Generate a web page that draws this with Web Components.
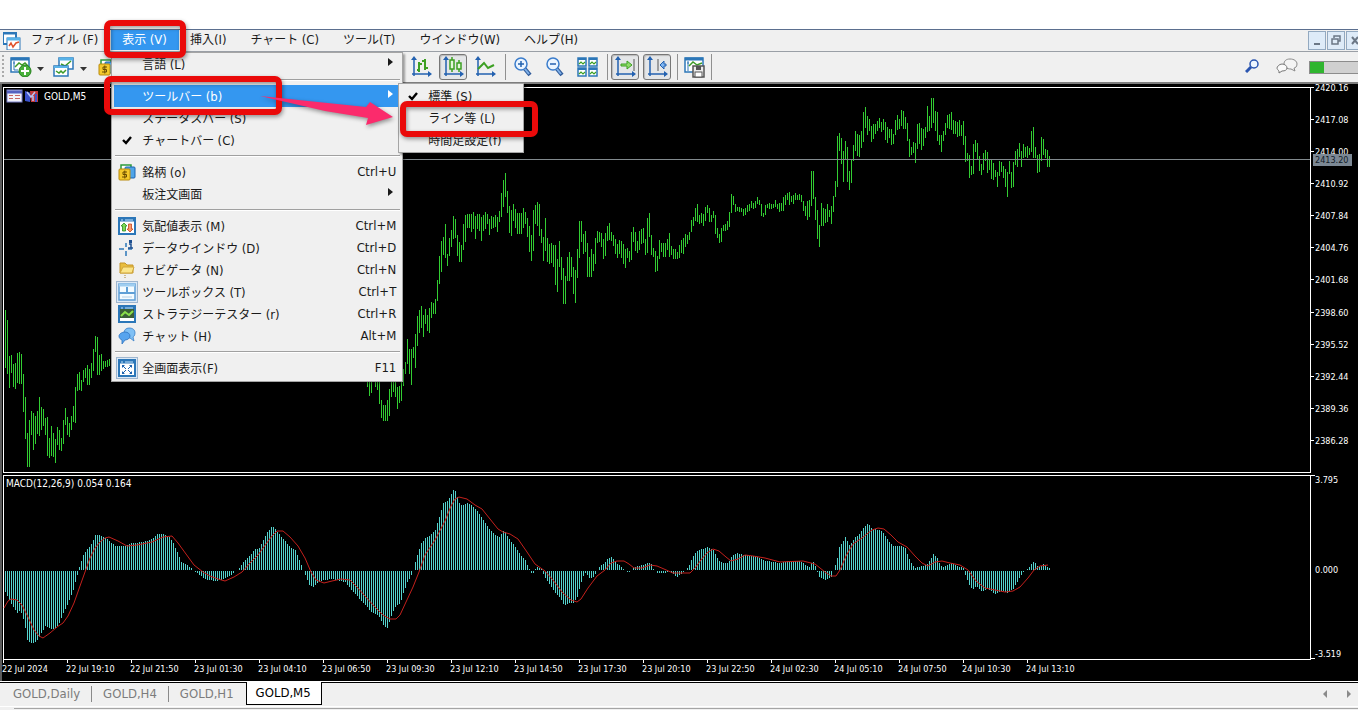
<!DOCTYPE html>
<html lang="ja">
<head>
<meta charset="utf-8">
<title>GOLD,M5</title>
<style>
html,body{margin:0;background:#fff}
body{font-family:"DejaVu Sans Condensed","Noto Sans CJK JP",sans-serif;font-size:12px;color:#1a1a1a}
</style>
</head>
<body>
<mt-app></mt-app>
<script>
const define=(name,css,html,setup)=>{
  customElements.define(name,class extends HTMLElement{
    connectedCallback(){
      if(this.shadowRoot)return;
      const root=this.attachShadow({mode:'open'});
      const a=n=>this.getAttribute(n)||'';
      root.innerHTML='<style>'+css+'</style>'+(typeof html==='function'?html(a,this):html);
      if(setup)setup(root,this);
    }
  });
};
/* Latin parts of a label are set one pixel larger than the kana */
const label=t=>t.replace(/(\([A-Za-z]\))$/,'<span class="k">$1</span>');

const win='<rect x="1" y="1" width="16" height="16" fill="#fff" stroke="#2c77b8" stroke-width="2"/><path d="M1 3H17" stroke="#2c77b8" stroke-width="3"/><path d="M3 3H5M7 3H15" stroke="#bfe2fb"/>';
const axes='<path d="M4 2V20M2 18H20" stroke="#2361b0" stroke-width="1.500"/><path d="M4 0L1 4H7ZM22 18L18 15V21Z" fill="#2361b0"/>';
const lens='<circle cx="8" cy="7" r="6" fill="#eaf4ff" stroke="#3a7ccc" stroke-width="1.500"/><path d="M12 12L17 18" stroke="#2e5a9a" stroke-width="4"/><path d="M12 12L16 17" stroke="#7fb0e8" stroke-width="2"/>';
const coins='<path d="M3 6V2H13V4" fill="#fff" stroke="#2b9a3c" stroke-width="1.500"/><rect x="7" y="4" width="10" height="11" rx="1" fill="#4fa4e8" stroke="#1d64b0"/><rect x="1" y="6" width="11" height="11" rx="1" fill="#f4c92c" stroke="#b98a0d"/><path d="M9 9H5V11.500H8.500V14H4M6.800 7.500V15.500" fill="none" stroke="#6a4c00"/>';
const ICONS={
 app:[18,18,'<rect x="0" y="0" width="13" height="12" fill="#fff" stroke="#2c77b8" stroke-width="2"/><path d="M0 1H13" stroke="#2c77b8" stroke-width="3"/><rect x="4" y="6" width="13" height="12" fill="#fff" stroke="#2c77b8"/><path d="M4 7H17" stroke="#58b2e8" stroke-width="3"/><path d="M6 14L8 11L10 15L13 11L16 10" fill="none" stroke="#e0522c" stroke-width="1.500"/>'],
 newchart:[22,20,'<rect x="1" y="1" width="18" height="14" fill="#fff" stroke="#2c77b8" stroke-width="1.500"/><path d="M1 2H19" stroke="#2c77b8" stroke-width="3"/><path d="M4 4V13H8M3 6H5" stroke="#2c77b8" fill="none"/><path d="M5 10L9 6L12 8L15 6L18 9" fill="none" stroke="#3d9b28" stroke-width="1.500"/><circle cx="15" cy="14" r="6" fill="#48b03a" stroke="#24801c"/><path d="M15 10V18M11 14H19" stroke="#fff" stroke-width="2"/>'],
 profiles:[22,20,'<rect x="6" y="1" width="14" height="11" fill="#fff" stroke="#2c77b8" stroke-width="1.500"/><path d="M6 2H20" stroke="#58b2e8" stroke-width="3"/><path d="M8 7L12 9L18 4" fill="none" stroke="#3d9b28" stroke-width="1.500"/><rect x="1" y="9" width="14" height="10" fill="#fff" stroke="#2c77b8" stroke-width="1.500"/><path d="M1 10H15" stroke="#58b2e8" stroke-width="2"/><path d="M3 14L6 16L8 14L10 16L13 13" fill="none" stroke="#3d9b28" stroke-width="1.500"/>'],
 coins:[18,18,coins],
 bars:[22,22,axes+'<path d="M9 6V16M7 14H9M9 8H12M15 3V14M12 5H15M15 12H18" stroke="#3da023" stroke-width="2"/>'],
 candles:[22,22,axes+'<path d="M10 1V16M17 4V16" stroke="#3da023" stroke-width="1.500"/><rect x="8" y="4" width="4" height="9" fill="#e3f6dc" stroke="#3da023" stroke-width="1.500"/><rect x="15" y="7" width="4" height="6" fill="#e3f6dc" stroke="#3da023" stroke-width="1.500"/>'],
 line:[22,22,axes+'<path d="M4 13L10 7L14 12L20 9" fill="none" stroke="#3da023" stroke-width="2"/>'],
 zoomin:[20,20,lens+'<path d="M8 4V10M5 7H11" stroke="#2361b0" stroke-width="1.500"/>'],
 zoomout:[20,20,lens+'<path d="M5 7H11" stroke="#2361b0" stroke-width="1.500"/>'],
 tile:[21,20,['0,0','11,0','0,10','11,10'].map(p=>'<g transform="translate('+p+')"><rect x="1" y="1" width="8" height="8" fill="#fff" stroke="#2c77b8" stroke-width="1.500"/><path d="M1 2H9" stroke="#2c77b8" stroke-width="2"/><path d="M2 7L4 5L6 7L8 5" fill="none" stroke="#3da023" stroke-width="1.200"/></g>').join('')],
 autoscroll:[22,22,axes+'<path d="M20 3V15" stroke="#555"/><path d="M7 8H13V5L18 9L13 13V10H7Z" fill="#8fdc6a" stroke="#3da023"/>'],
 shift:[22,22,axes+'<path d="M12 3V15" stroke="#555"/><path d="M20 8H18V5L14 9L18 13V10H20Z" fill="#7db4f0" stroke="#2361b0"/>'],
 template:[22,21,'<rect x="1" y="1" width="18" height="14" fill="#fff" stroke="#2c77b8" stroke-width="1.500"/><path d="M1 2H19" stroke="#2c77b8" stroke-width="3"/><path d="M4 4V14M3 6H5" stroke="#2c77b8"/><path d="M5 9L9 5L13 8L18 6" fill="none" stroke="#3d9b28" stroke-width="1.500"/><rect x="9" y="9" width="11" height="11" fill="#ececec" stroke="#555" stroke-width="1.500"/><rect x="12" y="9" width="5" height="4" fill="#555"/><rect x="11" y="15" width="7" height="5" fill="#fff" stroke="#555"/>'],
 search:[14,14,'<circle cx="9" cy="5" r="4" fill="#eef6ff" stroke="#2a55b0" stroke-width="1.500"/><path d="M6 8L1 13" stroke="#2a55b0" stroke-width="3"/>'],
 chats:[22,16,'<path d="M14 1C18 1 21 3 21 6S19 10 18 10L19 13L15 11C11 11 8 9 8 6S10 1 14 1Z" fill="#f4f4f4" stroke="#8a8a8a"/><path d="M6 6C9 6 11 8 11 10S9 13 6 13L3 15V13C2 12 1 11 1 10S3 6 6 6Z" fill="#fafafa" stroke="#777"/>'],
 market:[18,18,win+'<path d="M6 6L9 9H7.500V14H4.500V9H3Z" fill="#7ed957" stroke="#2b8a1c" stroke-width=".8"/><path d="M12 15L15 12H13.500V7H10.500V12H9Z" fill="#f79a6a" stroke="#c8441c" stroke-width=".8"/>'],
 data:[18,18,'<path d="M8 4V8M8 12V17M1 10H6M10 10H14" stroke="#2c77b8" stroke-width="1.500"/><path d="M11 5H13V9M10 9H15" stroke="#1d4f90" stroke-width="1.500" fill="none"/><rect x="11" y="1" width="3" height="3" fill="#1d4f90"/>'],
 folder:[18,18,'<path d="M2 2H7L9 4H15V12H2Z" fill="#e9bd3c" stroke="#c4952a"/><path d="M5 6H16L14 12H2Z" fill="#fbe58a" stroke="#d0a53a"/><path d="M7 14V17" stroke="#a8842c" stroke-dasharray="1 1"/>'],
 toolbox:[18,18,'<rect x="1" y="1" width="16" height="16" fill="#f4fbff" stroke="#5f9fd6" stroke-width="1.500"/><path d="M1 2H17" stroke="#9fcdf0" stroke-width="3"/><path d="M1 10H17M9 4V10" stroke="#5f9fd6" stroke-width="2"/><path d="M4 14H14" stroke="#b5cfe6"/>'],
 tester:[18,18,win+'<rect x="2" y="4" width="14" height="9" fill="#3c5f38"/><path d="M3 11L7 7L11 10L15 6" fill="none" stroke="#8be04a" stroke-width="2"/>'],
 chat:[18,18,'<path d="M11 1C15 1 17 3 17 6C17 9 15 10 15 10L16 14L12 11C8 11 6 9 6 6S8 1 11 1Z" fill="#7fc0f5" stroke="#3b80c8" stroke-width=".8"/><path d="M7 5C10 5 12 7 12 9S10 13 7 13L4 17V13C2 12 1 11 1 9S4 5 7 5Z" fill="#57a4ee" stroke="#2e74c0" stroke-width=".8"/>'],
 full:[18,18,win+'<path d="M4 9V6H7L4 9ZM14 9V6H11ZM4 12V15H7ZM14 12V15H11Z" fill="#1d64b0"/><path d="M5 7L8 10M13 7L10 10M5 14L8 11M13 14L10 11" stroke="#1d64b0"/>'],
 check:[10,9,'<path d="M1 4L4 7L9 1" fill="none" stroke="#000" stroke-width="2.400"/>'],
 sub:[5,8,'<path d="M0 0L5 4L0 8Z" fill="currentColor"/>'],
 drop:[7,4,'<path d="M0 0H7L3.500 4Z" fill="#333"/>'],
 min:[16,16,'<path d="M5 12H11" stroke="#6b7785" stroke-width="2"/>'],
 restore:[16,16,'<path d="M6 6V4H12V9H10" fill="none" stroke="#6b7785" stroke-width="1.500"/><rect x="4" y="7" width="6" height="5" fill="none" stroke="#6b7785" stroke-width="1.500"/>'],
 close:[16,16,'<path d="M5 5L11 12M11 5L5 12" stroke="#6b7785" stroke-width="2"/>'],
 prev:[4,8,'<path d="M4 0V8L0 4Z" fill="#8a8a8a"/>'],
 next:[4,8,'<path d="M0 0V8L4 4Z" fill="#8a8a8a"/>']
};
define('mt-icon',':host{display:inline-block;line-height:0}svg{display:block}',a=>{
  const i=ICONS[a('name')];
  return i?`<svg width="${i[0]}" height="${i[1]}" viewBox="0 0 ${i[0]} ${i[1]}" aria-hidden="true">${i[2]}</svg>`:'';
});

/* ---------- menus ---------- */
define('mt-menu',`:host{display:block;position:relative}
 button{display:block;height:20px;margin:0;padding:0 13px 0 11px;border:0;background:none;font:inherit;line-height:20px;color:inherit;white-space:nowrap}
 :host([open]) button{padding:0 12px 0 11px;background:#3497f0;color:#fff}
 .k{font-size:13px}
 .pop{position:absolute;left:0;top:22px;z-index:5}`,
 a=>`<button type="button">${label(a('label'))}</button><div class="pop"><slot></slot></div>`);
define('mt-popup',`:host{display:block;box-sizing:border-box;background:#f0f0f0;border:1px solid #a5a5a5;padding:0 2px 2px;box-shadow:2px 2px 2px rgba(0,0,0,.35)}
 :host([kind=main]){width:292px}
 :host([kind=sub]){width:126px;padding:1px}`,'<slot></slot>');
define('mt-sep',':host{display:block;box-sizing:border-box;height:10px;padding:4px 0 0 1px}hr{margin:0;border:0;border-top:1px solid #a0a0a0;border-bottom:1px solid #fff}','<hr>');
define('mt-row',`:host{display:block;position:relative}
 button{display:grid;grid-template-columns:28px 1fr auto;align-items:center;width:100%;height:22px;margin:0;padding:0 4px 0 0;border:0;background:none;font:inherit;color:inherit;text-align:left;white-space:nowrap}
 :host([active])>button,:host([active]) button{background:#3497f0;color:#fff}
 .i{display:flex;justify-content:center;align-items:center;box-sizing:border-box;width:22px;height:22px;margin-left:2px}
 :host([framed]) .i{background:#dce9f6;border:1px solid #9fb6cf}
 .t,.s{margin-bottom:2px}
 .k,.s{font-size:13px}
 .a{margin:0 3px 4px 0}
 .pop{position:absolute;left:calc(100% - 2px);top:-2px;z-index:6;color:#1a1a1a}`,
 a=>`<button type="button"><span class="i"><mt-icon name="${a('icon')}"></mt-icon></span><span class="t">${label(a('label'))}</span>${a('more')?'<mt-icon class="a" name="sub"></mt-icon>':`<span class="s">${a('key')}</span>`}</button><div class="pop"><slot></slot></div>`);
define('mt-menubar',`:host{display:flex;align-items:flex-start;box-sizing:border-box;height:23px;border-top:1px solid #5b6f8f;border-bottom:1px solid #9a9fa6;background:#f0f0f0}
 .logo{margin:2px 0 0 3px;width:17px}
 .w{display:flex;gap:1px;margin:1px 0 0 auto;width:50px;overflow:hidden}
 .w button{flex:none;box-sizing:border-box;width:18px;height:19px;padding:0;border:1px solid #93a9c0;background:#deebf8}`,
 `<mt-icon class="logo" name="app"></mt-icon>
 <mt-menu label="ファイル (F)"></mt-menu>
 <mt-menu label="表示 (V)" open>
  <mt-popup kind="main">
   <mt-row label="言語 (L)" more="1"></mt-row>
   <mt-sep></mt-sep>
   <mt-row label="ツールバー (b)" more="1" active>
    <mt-popup kind="sub">
     <mt-row icon="check" label="標準 (S)"></mt-row>
     <mt-row label="ライン等 (L)"></mt-row>
     <mt-row label="時間足設定(f)"></mt-row>
    </mt-popup>
   </mt-row>
   <mt-row label="ステータスバー (S)"></mt-row>
   <mt-row icon="check" label="チャートバー (C)"></mt-row>
   <mt-sep></mt-sep>
   <mt-row icon="coins" label="銘柄 (o)" key="Ctrl+U"></mt-row>
   <mt-row label="板注文画面" more="1"></mt-row>
   <mt-sep></mt-sep>
   <mt-row icon="market" label="気配値表示 (M)" key="Ctrl+M"></mt-row>
   <mt-row icon="data" label="データウインドウ (D)" key="Ctrl+D"></mt-row>
   <mt-row icon="folder" label="ナビゲータ (N)" key="Ctrl+N"></mt-row>
   <mt-row icon="toolbox" label="ツールボックス (T)" key="Ctrl+T" framed></mt-row>
   <mt-row icon="tester" label="ストラテジーテスター (r)" key="Ctrl+R"></mt-row>
   <mt-row icon="chat" label="チャット (H)" key="Alt+M"></mt-row>
   <mt-sep></mt-sep>
   <mt-row icon="full" label="全画面表示(F)" key="F11" framed></mt-row>
  </mt-popup>
 </mt-menu>
 <mt-menu label="挿入(I)"></mt-menu>
 <mt-menu label="チャート (C)"></mt-menu>
 <mt-menu label="ツール(T)"></mt-menu>
 <mt-menu label="ウインドウ(W)"></mt-menu>
 <mt-menu label="ヘルプ(H)"></mt-menu>
 <div class="w"><button aria-label="最小化"><mt-icon name="min"></mt-icon></button><button aria-label="元に戻す"><mt-icon name="restore"></mt-icon></button><button aria-label="閉じる"><mt-icon name="close"></mt-icon></button></div>`);

/* ---------- toolbar ---------- */
define('mt-tool',`:host{display:block;flex:none;width:28px;margin:0 2px}
 button{display:flex;align-items:center;justify-content:center;box-sizing:border-box;width:28px;height:26px;padding:0;border:1px solid transparent;border-radius:3px;background:none}
 :host([pressed]) button{border-color:#777;background:#e4e6e8;box-shadow:inset 1px 1px 1px #bbb}`,
 a=>`<button type="button" aria-label="${a('icon')}"><mt-icon name="${a('icon')}"></mt-icon></button>`);
define('mt-toolbar',`:host{display:flex;align-items:center;box-sizing:border-box;height:32px;background:#f0f0f0;border-bottom:2px solid #7d7d7d}
 .g{display:flex;align-items:center;box-sizing:border-box;width:405px;padding-left:2px}
 .grip{width:2px;height:24px;margin-right:1px;background:repeating-linear-gradient(#aaa 0 2px,transparent 2px 4px)}
 .d{width:11px}
 .sep{width:6px;height:26px;background:linear-gradient(#909090,#909090) 4px 0/1px 100% no-repeat}
 .sep.end{background-position:0 0}
 .r{display:flex;align-items:center;gap:17px;margin-left:auto}
 .r button{padding:0;border:0;background:none}
 .p{width:49px;height:13px;box-sizing:border-box;margin-left:-6px;border:1px solid #8c8c8c;border-right:0;background:linear-gradient(90deg,#2fb52f 14px,#d0d0d0 14px)}`,
 `<div class="g"><span class="grip"></span><mt-tool icon="newchart"></mt-tool><span class="d"><mt-icon name="drop"></mt-icon></span><mt-tool icon="profiles"></mt-tool><span class="d"><mt-icon name="drop"></mt-icon></span><mt-tool icon="coins"></mt-tool></div>
 <mt-tool icon="bars"></mt-tool><mt-tool icon="candles" pressed></mt-tool><mt-tool icon="line"></mt-tool><span class="sep"></span>
 <mt-tool icon="zoomin"></mt-tool><mt-tool icon="zoomout"></mt-tool><mt-tool icon="tile"></mt-tool><span class="sep"></span>
 <mt-tool icon="autoscroll" pressed></mt-tool><mt-tool icon="shift" pressed></mt-tool><span class="sep"></span><mt-tool icon="template"></mt-tool><span class="sep end"></span>
 <div class="r"><button aria-label="検索"><mt-icon name="search"></mt-icon></button><button aria-label="チャット"><mt-icon name="chats"></mt-icon></button><div class="p"></div></div>`);

/* ---------- chart data: first bar x, then high-low of each bar, two pixels apart ---------- */
const BARS=[
[5,'310-368 320-374 356-388 355-373 364-387 363-389 353-383 352-384 354-384 374-412 397-439 433-467 420-467 411-435 413-450 416-444 411-434 397-436 407-430 409-426 418-435 417-456 438-458 426-456 433-457 439-463 427-445 430-450 438-451 420-444 408-425 417-435 423-437 416-430 406-422 387-423 374-391 372-390 380-391 370-382 368-378 365-385 369-385 363-378 349-371 336-352 337-375 355-375 354-371 361-369 361-367 360-367 359-366'],
[367,'375-387 375-396 375-393 370-380 375-387 375-390 375-404 400-418 405-421 405-421 400-421 389-416 380-397 375-392 382-397 387-409 386-403 382-401 369-386 362-374 339-364 349-374 349-385 347-358 334-368 316-346 310-333 306-328 315-337 309-324 315-331 308-333 302-318 303-314 299-314 280-301 256-284 241-272 237-255 224-258 254-266 238-256 230-247 216-239 219-238 235-256 242-262 245-262 224-250 215-242 214-228 214-228 214-232 212-229 216-239 214-229 214-231 217-241 215-231 212-229 214-224 219-235 216-229 217-228 215-227 217-232 211-222 193-217 180-207 173-197 191-213 206-233 210-236 204-221 209-228 213-234 213-234 213-234 208-228 212-224 218-237 226-252 235-261 210-251 205-224 202-226 204-236 229-243 237-261 218-251 238-262 244-264 243-263 245-267 245-285 259-292 241-267 257-280 268-304 276-304 257-281 252-281 257-277 267-294 270-303 249-278 221-258 221-242 234-254 231-252 243-277 257-277 249-277 254-271 238-264 231-243 232-242 233-247 239-259 233-256 226-241 223-240 232-241 235-246 239-254 244-258 240-254 241-258 244-264 249-268 248-258 251-262 232-260 227-242 232-251 241-253 231-250 229-244 228-243 239-255 218-253 213-237 235-255 248-257 251-272 256-271 240-259 243-252 243-257 243-257 239-250 233-257 246-255 249-259 249-259 252-259 245-258 240-253 238-254 234-247 235-244 232-240 220-232 217-226 208-221 204-222 215-224 213-223 214-226 207-221 205-213 208-222 215-222 211-218 215-234 228-238 234-243 228-242 225-231 224-231 221-230 212-227 194-213 196-205 204-212 207-211 207-212 208-212 209-216 208-215 205-212 204-211 201-208 203-209 201-208 197-204 200-205 204-216 213-217 205-215 204-208 203-209 204-209 204-208 200-207 204-209 203-212 203-211 197-211 195-205 193-200 192-205 196-202 195-204 193-200 195-200 194-200 195-202 201-211 206-216 201-220 200-217 171-206 171-199 197-220 210-239 225-247 203-226 208-226 209-223 204-222 210-217 206-224 196-212 181-197 136-187 133-151 138-164 151-182 141-160 147-182 171-190 159-183 145-161 131-151 134-156 135-157 131-148 112-142 107-128 116-135 119-131 126-142 124-139 124-134 121-131 118-128 122-132 119-130 122-140 127-143 129-138 129-145 134-144 120-135 115-130 119-129 110-126 111-129 117-129 123-141 139-157 147-155 142-153 143-163 124-149 123-144 128-150 129-146 127-138 106-132 116-131 98-128 98-123 111-131 112-141 135-145 135-152 131-141 123-135 115-128 114-129 112-130 120-134 121-134 122-137 120-136 125-136 121-145 136-162 153-161 155-178 166-175 144-174 140-152 143-160 156-171 164-175 153-170 150-161 152-173 160-170 160-179 163-180 170-177 172-187 161-176 162-172 166-178 169-187 172-197 161-174 172-188 162-187 151-165 149-167 143-157 151-167 144-158 147-157 146-158 148-155 131-152 127-158 147-158 155-173 154-172 137-161 139-155 149-158 150-167 156-167']];
const MACD='5,592 8,598 12,606 17,613 20,610 22,615 25,628 27,640 30,643 33,643 37,640 39,637 45,626 52,630 58,625 63,613 68,603 73,590 76,578 78,571 79,567 83,555 87,549 92,543 95,535 100,535 107,539 115,546 125,546 131,543 143,542 152,539 157,534 163,534 170,538 173,543 177,552 181,562 187,565 193,570 197,573 202,577 207,580 217,581 223,579 230,576 235,571 238,569 243,562 250,555 255,549 259,548 263,540 267,532 272,526 275,529 282,538 290,547 295,550 300,563 303,570 306,578 309,585 313,587 317,583 323,580 333,579 345,582 353,592 363,603 372,613 378,615 383,625 387,628 392,613 395,607 400,603 403,593 407,582 411,575 413,570 415,562 418,552 421,543 425,538 430,535 435,530 438,520 443,503 448,500 453,490 456,492 458,502 462,506 467,503 472,506 477,511 482,518 487,526 490,530 495,535 499,537 504,530 508,538 515,547 520,555 525,560 529,569 532,575 534,570 537,567 541,569 543,574 548,583 555,593 560,598 564,606 568,603 573,603 577,597 580,585 584,573 586,573 589,578 593,577 597,570 600,565 604,563 608,558 612,557 615,562 620,566 624,570 628,573 632,569 635,567 642,565 648,562 651,564 653,569 657,573 663,573 670,572 677,577 682,573 685,570 688,567 692,558 696,551 702,549 707,547 713,550 718,560 723,563 728,563 732,555 737,553 743,555 755,556 762,560 780,563 787,561 800,561 805,565 809,567 812,561 814,563 817,572 819,577 825,580 831,577 833,570 836,563 839,547 842,543 845,537 849,545 853,540 856,535 858,536 863,528 867,524 869,525 872,529 880,530 883,533 888,541 893,546 900,546 905,548 908,557 912,565 915,568 922,566 928,563 933,554 937,558 940,565 943,567 950,563 957,566 963,568 965,575 968,583 972,590 976,586 982,592 987,588 995,594 1002,590 1007,593 1013,589 1018,580 1023,572 1027,569 1029,567 1032,562 1035,563 1038,568 1043,564 1050,569'.split(' ').map(p=>p.split(',').map(Number));
const SIGNAL='4,608 8,601 11,599 17,600 22,605 28,617 34,630 39,636 43,638 50,633 57,627 63,623 68,616 74,603 80,586 85,572 90,558 95,548 100,542 105,538 109,537 118,541 127,546 137,545 152,542 163,537 172,536 178,543 186,554 194,565 203,572 210,576 218,579 225,581 234,577 242,572 250,563 258,555 266,544 272,536 277,531 283,531 290,537 298,546 305,558 311,572 316,580 324,583 332,581 341,579 350,580 357,587 365,596 375,607 383,615 390,619 396,619 400,615 406,602 413,587 419,572 425,555 435,540 445,521 451,506 455,499 459,497 467,499 475,505 482,509 490,519 498,529 503,532 510,534 518,539 527,552 535,564 545,571 553,580 562,592 571,600 577,602 581,599 588,588 597,576 605,570 611,563 617,561 624,561 629,564 634,568 642,568 650,565 657,566 664,569 673,573 683,573 690,573 695,568 701,560 707,553 713,549 719,551 726,557 731,561 738,559 745,555 753,556 765,558 780,562 803,561 815,564 825,572 831,576 836,576 840,570 846,556 853,544 862,538 872,530 878,528 884,529 891,535 898,542 907,547 915,556 922,563 928,566 935,562 942,561 950,563 960,565 968,570 976,581 985,588 995,590 1005,592 1013,591 1020,587 1028,578 1034,570 1040,566 1048,565';
const TIMES=['22 Jul 2024','22 Jul 19:10','22 Jul 21:50','23 Jul 01:30','23 Jul 04:10','23 Jul 06:50','23 Jul 09:30','23 Jul 12:10','23 Jul 14:50','23 Jul 17:30','23 Jul 20:10','23 Jul 22:50','24 Jul 02:30','24 Jul 05:10','24 Jul 07:50','24 Jul 10:30','24 Jul 13:10'];
const PRICES=[['2420.16',87],['2417.08',119],['2414.00',151],['2410.92',183],['2407.84',215],['2404.76',247],['2401.68',279],['2398.60',312],['2395.52',344],['2392.44',376],['2389.36',408],['2386.28',440]];

define('mt-chart',`:host{display:grid;grid-template-columns:1fr 48px;height:597px;background:#000;box-shadow:inset 2px 0 0 #5c5c5c;overflow:hidden}
 svg{display:block;width:100%;height:597px}
 text{font-size:9px;fill:#fff}
 .cap{font-size:10px}
 .now{fill:#111c28}`,()=>{
  let price='',macd='',ticks='',times='',axis='',labels='';
  const bar=(x,y1,y2)=>`M${x} ${y1}h1V${y2}h-1Z`;
  for(const [x0,s] of BARS)s.split(' ').forEach((b,i)=>{const [h,l]=b.split('-');price+=bar(x0+i*2,h,l);});
  for(let x=5,i=0;x<=1049;x+=2){
    while(MACD[i+1][0]<x)i++;
    const [a,b]=[MACD[i],MACD[i+1]],y=Math.round(a[1]+(b[1]-a[1])*(x-a[0])/(b[0]-a[0]));
    if(y<570)macd+=bar(x,y,570);else if(y>571)macd+=bar(x,571,y);
  }
  TIMES.forEach((t,i)=>{ticks+=`M${3+i*64}.5 659V663`;times+=`<text x="${2+i*64}" y="672">${t}</text>`;});
  PRICES.forEach(([t,y])=>{axis+=`M0 ${y}.5H4`;labels+=`<text x="5" y="${y+4}">${t}</text>`;});
  return `<svg><g transform="translate(0,-84)">
   <path d="M3 87.5H4000M3 472.5H4000M3 475.5H4000M3 659.5H4000M3.5 87V473M3.5 475V660${ticks}" fill="none" stroke="#fff"/>
   <path d="${price}" fill="#32cd32"/><path d="${macd}" fill="#54d2cc"/>
   <path d="M4 159.500H4000" stroke="#828a8e"/>
   <polyline points="${SIGNAL}" fill="none" stroke="#c4201c"/>
   <g><rect x="7" y="90" width="15" height="12" fill="#f2f2fa" stroke="#7a80c8"/><path d="M7 92H22" stroke="#5560c0" stroke-width="3"/><path d="M9 95.500H13M15 95.500H20M9 98.500H13M15 98.500H20" stroke="#c86464"/></g>
   <g><path d="M25 91L31 93L30 102L25 101Z" fill="#3c53cc"/><path d="M30 91H38V102H31Z" fill="#c43a3a"/><path d="M27 92L31 97L35 92M33 96V101" fill="none" stroke="#b8c4f4" stroke-width="1.500"/><path d="M36 94V102" stroke="#3c53cc" stroke-width="2"/></g>
   <text class="cap" x="44" y="100">GOLD,M5</text><text class="cap" x="6" y="487">MACD(12,26,9) 0.054 0.164</text>${times}
  </g></svg>
  <svg><g transform="translate(0,-84)"><path fill="none" stroke="#fff" d="M.5 87V473M.5 475V660M0 475.5H5M0 658.5H5${axis}"/>${labels}
   <rect x="3" y="154" width="39" height="12" fill="#7c8894"/><text class="now" x="5" y="163">2413.20</text>
   <text x="5" y="483">3.795</text><text x="5" y="573">0.000</text><text x="5" y="657">-3.519</text></g></svg>`;
});

/* ---------- tabs ---------- */
define('mt-tab',`:host{display:block;flex:none}
 button{box-sizing:border-box;height:23px;margin:0;padding:0 12px 0 11px;border:0;background:none;font:inherit;font-size:13px;line-height:20px;color:#7c7c7c}
 :host([line]) button{background:linear-gradient(#8a8a8a,#8a8a8a) 100% 4px/1px 16px no-repeat}
 :host([current]) button{padding:0 10px 0 9px;background:#fff;border:1px solid #000;border-top:0;color:#000}`,'<button type="button"><slot></slot></button>');
define('mt-tabs',`:host{display:block;background:#f0f0f0;border-top:1px solid #fff}
 nav{display:flex;height:24px;box-sizing:border-box;padding-left:2px;background:linear-gradient(#000,#000) 0 0/100% 1px no-repeat}
 .n{display:flex;gap:20px;align-items:center;margin:0 7px 0 auto}
 .n button{padding:0;border:0;background:none;line-height:0}
 .foot{height:3px;border-top:1px solid #fff}
 .foot hr{margin:1px 0 0 14px;border:0;border-top:1px solid #a5a5a5}`,
 `<nav><mt-tab line>GOLD,Daily</mt-tab><mt-tab line>GOLD,H4</mt-tab><mt-tab>GOLD,H1</mt-tab><mt-tab current>GOLD,M5</mt-tab><div class="n"><button aria-label="前へ"><mt-icon name="prev"></mt-icon></button><button aria-label="次へ"><mt-icon name="next"></mt-icon></button></div></nav><div class="foot"><hr></div>`);

/* ---------- tutorial marks drawn over the window ---------- */
define('mt-marks',':host{position:absolute;left:0;top:0;z-index:9;pointer-events:none}svg{display:block;filter:drop-shadow(1px 2px 2px rgba(0,0,0,.4))}',
 `<svg width="560" height="150"><g fill="none" stroke="#ea0a0a" stroke-width="6"><rect x="107" y="23" width="76" height="32" rx="4"/><rect x="107" y="79" width="172" height="33" rx="4"/><rect x="403" y="104" width="132" height="30" rx="4"/></g><path d="M260 96L366 107L370 102L393 117L366 125L368 118L325 111Z" fill="#fb2b6c"/></svg>`);
define('mt-app',':host{display:block;position:relative;padding-top:29px;overflow:hidden;background:#fff}','<mt-menubar></mt-menubar><mt-toolbar></mt-toolbar><mt-chart></mt-chart><mt-tabs></mt-tabs><mt-marks></mt-marks>');
</script>
</body>
</html>
